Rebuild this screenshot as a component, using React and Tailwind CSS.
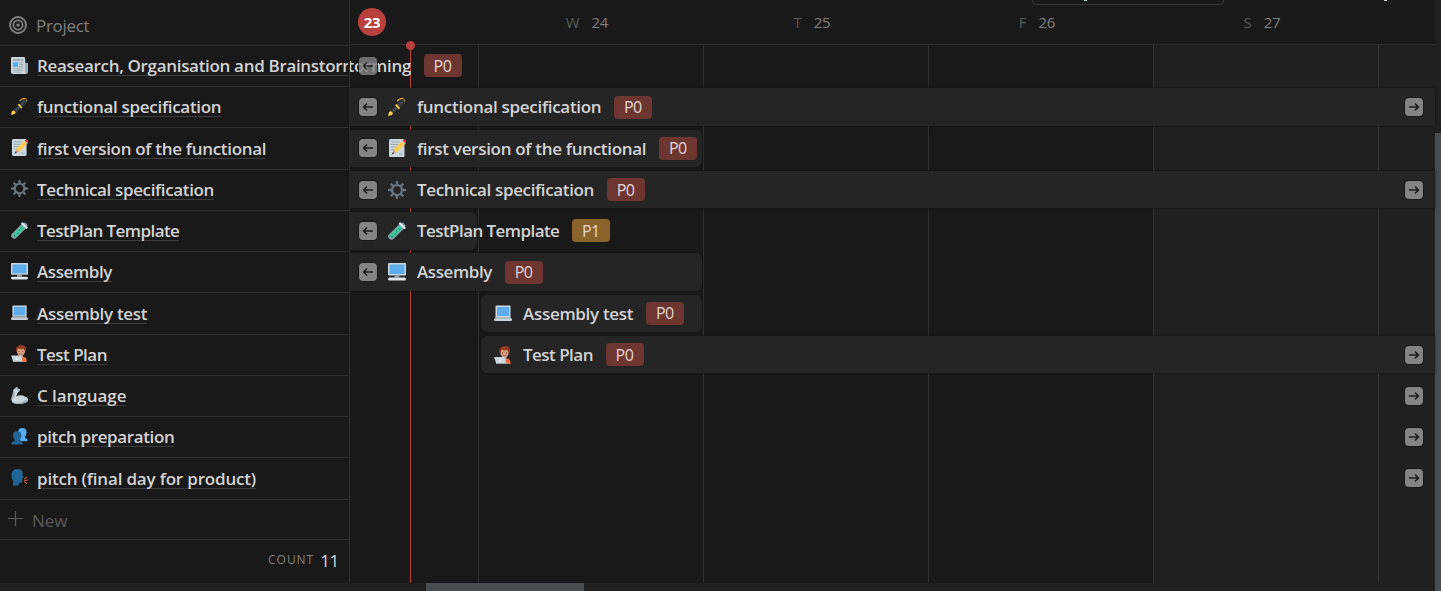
import React from "react";

const Emoji = ({ name, className }) => (
  <svg viewBox="0 0 36 36" className={`shrink-0 ${className}`}>
    {EMOJI[name]}
  </svg>
);

const EMOJI = {
  newspaper: (
    <>
      <path fill="#99AAB5" d="M26 12h7a3 3 0 0 1 3 3v17a4 4 0 0 1-4 4h-6z" />
      <path fill="#CCD6DD" d="M3 0h24a3 3 0 0 1 3 3v29c0 2 1 4 3 4H4a4 4 0 0 1-4-4V3a3 3 0 0 1 3-3z" />
      <path fill="#99AAB5" d="M4 4h22v4H4zM17 11h9v2h-9zM17 15h9v2h-9zM17 19h9v2h-9zM4 23h22v2H4zM4 27h22v2H4zM4 31h19v2H4z" />
      <path fill="#55ACEE" d="M4 11h11v10H4z" />
    </>
  ),
  pen: (
    <>
      <path fill="#FFCC4D" d="M0 36l2-8 4-2 4 4-2 4z" />
      <path fill="#31383d" d="M6 25L25 4q5-4 8-1t-1 8L12 31z" />
      <path fill="#454d53" d="M9 25L27 7l2 2-18 19z" />
      <path fill="#FFCC4D" d="M14 14l3-2 7 8-2 3z" />
      <path fill="none" stroke="#FFAC33" strokeWidth="2.200" d="M18 6q7-6 12-5" />
      <path fill="none" stroke="#FFAC33" strokeWidth="2" strokeDasharray="3 2" d="M30 1q6 2 2 8" />
    </>
  ),
  memo: (
    <>
      <path fill="#CCD6DD" d="M5 0h25a3 3 0 0 1 3 3v30a3 3 0 0 1-3 3H5a3 3 0 0 1-3-3V3a3 3 0 0 1 3-3z" />
      <path fill="#99AAB5" d="M6 5h17v2H6zM6 10h15v2H6zM6 15h11v2H6zM6 20h7v2H6zM22 29h7v2h-7z" />
      <path fill="#FFCC4D" d="M11 21L28 4l6 6-17 17z" />
      <path fill="#CCD6DD" d="M28 4l2-2 6 6-2 2z" />
      <path fill="#DD2E44" d="M30 2q2-2 5 0t1 5l-1 2-6-6z" />
      <path fill="#D99E82" d="M11 21l6 6-8 3z" />
      <path fill="#292F33" d="M10 26l-3 5 5-2z" />
    </>
  ),
  gear: (
    <>
      <g fill="#66757F">
        <path d="M16 0h4l1 7h-6zM16 36h4l1-7h-6zM0 16v4l7 1v-6zM36 16v4l-7 1v-6z" />
        <path d="M4 7l3-3 6 5-4 4zM32 7l-3-3-6 5 4 4zM4 29l3 3 6-5-4-4zM32 29l-3 3-6-5 4-4z" />
      </g>
      <circle cx="18" cy="18" r="10" fill="none" stroke="#66757F" strokeWidth="4.500" />
    </>
  ),
  tube: (
    <>
      <path stroke="#8899A6" strokeWidth="13" strokeLinecap="round" d="M7 29L28 8" />
      <path stroke="#3CC9A0" strokeWidth="8.500" strokeLinecap="round" d="M8 28L24 12" />
      <path stroke="#E1E8ED" strokeWidth="4.500" strokeLinecap="round" d="M24 3l9 9" />
      <g fill="#1C8F62">
        <circle cx="8" cy="29" r="2" />
        <circle cx="15" cy="24" r="1.7" />
        <circle cx="17" cy="18" r="1.5" />
        <circle cx="23" cy="15" r="1.5" />
      </g>
    </>
  ),
  desktop: (
    <>
      <path fill="#CCD6DD" d="M2 0h32a2 2 0 0 1 2 2v21a2 2 0 0 1-2 2H2a2 2 0 0 1-2-2V2a2 2 0 0 1 2-2z" />
      <path fill="#5DADEC" d="M3 3h30v19H3z" />
      <path fill="#99AAB5" d="M13 25h10v4H13z" />
      <path fill="#E1E8ED" d="M3 29h30q3 0 3 3t-3 3H3q-3 0-3-3t3-3z" />
      <path stroke="#CCD6DD" strokeDasharray="3 1" d="M3 32h30" />
    </>
  ),
  laptop: (
    <>
      <path fill="#CCD6DD" d="M5 3h26a1.500 1.500 0 0 1 2 2v21H3V5a2 2 0 0 1 2-2z" />
      <path fill="#5DADEC" d="M6 6h24v18H6z" />
      <path fill="#AEBBC1" d="M3 26h30l3 5H0z" />
      <path fill="#CCD6DD" d="M0 30h36v2q0 2-3 2H3q-3 0-3-2z" />
    </>
  ),
  technologist: (
    <>
      <path fill="#F4713B" d="M9 36v-5q0-5 6-6h11q7 1 7 7v4z" />
      <path fill="#D99E82" d="M17 20h8v8h-8z" />
      <ellipse cx="21" cy="13" rx="8.500" ry="10" fill="#D99E82" />
      <path fill="#963B22" d="M11 14Q9 6 14 3q3-3 8-3 9 0 10 8 0 4-2 7-1-6-4-7-6 2-10-1-3 2-3 8z" />
      <path fill="#662113" d="M16 13h2v2h-2zM24 13h2v2h-2z" />
      <path fill="none" stroke="#9E4F35" strokeWidth="1.500" d="M18 19h6" />
      <path fill="#CCD6DD" d="M0 22h20q2 0 2 2l2 12H5z" />
      <path fill="#99AAB5" d="M4 34h22v2H4z" />
      <circle cx="12" cy="29" r="2.200" fill="#F5F8FA" />
    </>
  ),
  arm: (
    <>
      <path fill="#CCD6DD" d="M5 6l5-4 7 2 1 5-4 3-3 8q10-5 18 0 7 1 7 7 0 7-11 8Q11 38 3 33q-4-7 0-16z" />
      <path fill="#99AAB5" d="M5 6l3 4-2 11-5 7q0-8 4-15zM3 31q12 5 23-1l9-3q0 7-11 8-14 2-21-4z" />
      <path fill="#AAB8C2" d="M10 0h4v5h-4zM15 3l4 2-2 5-3-1z" />
    </>
  ),
  people: (
    <>
      <path fill="#55ACEE" d="M15 9q0-9 9-9t9 9q0 6-3 9v3q5 1 5 5v2H20z" />
      <path fill="#226699" d="M4 16q0-9 9-9t9 9q0 7-4 10v2q7 1 7 6v1H1v-2q0-4 7-5v-2q-4-4-4-10z" />
    </>
  ),
  speaking: (
    <>
      <path fill="#226699" d="M1 12Q2 0 14 0q10 0 11 9l-1 3 2 6-2 2v6q-1 4-7 3l-1 6H4l1-9q-5-6-4-14z" />
      <path fill="none" stroke="#F4713B" strokeWidth="2" d="M28 21l6-4M28 24h7M28 27l6 4" />
    </>
  ),
};

const TASKS = [
  { icon: "newspaper", name: "Reasearch, Organisation and Brainstorming", track: "tracking-[-0.32px]", bar: "past", tag: "P0" },
  { icon: "pen", name: "functional specification", track: "tracking-[-0.3px]", bar: "w-full", from: true, to: true, tag: "P0" },
  { icon: "memo", name: "first version of the functional", track: "tracking-[-0.3px]", bar: "w-[352px] rounded-r-md", from: true, tag: "P0" },
  { icon: "gear", name: "Technical specification", track: "tracking-[-0.36px]", bar: "w-full", from: true, to: true, tag: "P0" },
  { icon: "tube", name: "TestPlan Template", track: "tracking-[-0.57px]", bar: "w-[127px] rounded-r-md", from: true, tag: "P1" },
  { icon: "desktop", name: "Assembly", track: "tracking-[-0.4px]", bar: "w-[352px] rounded-r-md", from: true, tag: "P0" },
  { icon: "laptop", name: "Assembly test", track: "tracking-[-0.3px]", bar: "ml-[131px] w-[221px] rounded-md", tag: "P0" },
  { icon: "technologist", name: "Test Plan", track: "tracking-[-0.53px]", bar: "ml-[131px] w-[954px] rounded-l-md", to: true, tag: "P0" },
  { icon: "arm", name: "C language", track: "tracking-[-0.05px]", to: true },
  { icon: "people", name: "pitch preparation", track: "tracking-[-0.37px]", to: true },
  { icon: "speaking", name: "pitch (final day for product)", track: "tracking-[-0.18px]", to: true },
];

const DAYS = [
  ["W", "24"],
  ["T", "25"],
  ["F", "26"],
  ["S", "27"],
];

const TITLE = "text-[17px] font-semibold whitespace-nowrap text-[#d3d3d3]";

const Jump = ({ flip, className = "" }) => (
  <span className={`flex size-[18px] shrink-0 items-center justify-center rounded bg-[#848484] shadow-[0_0_0_1px_#181818] ${className}`}>
    <svg viewBox="0 0 12 12" className={`size-3 ${flip ? "-scale-x-100" : ""}`} fill="none" stroke="#1b1b1b" strokeWidth="1.500" strokeLinecap="round" strokeLinejoin="round">
      <path d="M1.500 6h9M7.400 3L10.500 6 7.400 9" />
    </svg>
  </span>
);

const Tag = ({ label }) => (
  <span
    className={`ml-[13px] flex h-[23px] w-[38px] shrink-0 items-center justify-center rounded pr-px text-base tracking-[-0.5px] text-[#e3d6d4] ${
      label === "P1" ? "bg-[#89632a]" : "bg-[#6e3630]"
    }`}
  >
    {label}
  </span>
);

function TaskBar({ task }) {
  if (task.bar === "past") {
    return (
      <div className="relative flex h-[37.5px] items-center">
        <div className={`flex w-[61px] justify-end overflow-hidden leading-6 ${TITLE} ${task.track}`}>{task.name}</div>
        <Tag label={task.tag} />
        <Jump flip className="absolute left-[9px] opacity-80" />
      </div>
    );
  }
  return (
    <div className="relative flex h-[37.5px] items-center">
      {task.bar && (
        <div className={`flex h-full items-center bg-[#252525] shadow-[0_0_2px_#111] ${task.bar} ${task.from ? "pl-[9px]" : "pl-[13px]"}`}>
          {task.from && <Jump flip className="mr-[11px]" />}
          <Emoji name={task.icon} className="mr-[11px] size-[18px]" />
          <span className={`mt-[0.5px] leading-5 ${TITLE} ${task.track}`}>{task.name}</span>
          <Tag label={task.tag} />
        </div>
      )}
      {task.to && <Jump className="absolute right-3" />}
    </div>
  );
}

function Sidebar() {
  return (
    <aside className="flex w-[350px] shrink-0 flex-col border-r border-[#2f2f2f]">
      <div className="mr-px flex h-[45.9px] items-center border-b border-[#2f2f2f] pt-[5px] pl-[9px]">
        <svg viewBox="0 0 18 18" className="size-[18px]" fill="none" stroke="#7f7f7f" strokeWidth="2">
          <circle cx="9" cy="9" r="8" />
          <circle cx="9" cy="9" r="4.600" strokeWidth="1.800" />
          <circle cx="9" cy="9" r="1.700" fill="#7f7f7f" stroke="none" />
        </svg>
        <span className="mt-[2px] ml-[9px] text-[17px] tracking-[-0.3px] text-[#7f7f7f]">Project</span>
      </div>
      {TASKS.map((t) => (
        <div key={t.name} className="mr-px flex h-[41.25px] items-center overflow-hidden border-b border-[#2f2f2f] pt-[1.2px] pl-[11px]">
          <Emoji name={t.icon} className="mr-[9px] mb-[3px] size-[17px]" />
          <span className={`border-b border-[#3c3c3c] leading-[18px] ${TITLE} ${t.track}`}>{t.name}</span>
        </div>
      ))}
      <div className="flex h-[40.35px] items-center border-b border-[#2f2f2f] pl-2">
        <svg viewBox="0 0 15 15" className="mb-px size-[15px]" stroke="#5a5a5a" strokeWidth="1.200">
          <path d="M7.500 0v15M0 7.500h15" />
        </svg>
        <span className="mt-[2px] ml-[9px] text-[17px] text-[#5a5a5a]">New</span>
      </div>
      <div className="flex flex-1 items-center justify-end pr-2.5 pb-[2px]">
        <span className="mr-1.5 text-xs tracking-[0.95px] text-[#7f7f7f]">COUNT</span>
        <span className="text-[17px] tracking-[-0.3px] text-[#d6d6d6]">11</span>
      </div>
    </aside>
  );
}

function Timeline() {
  return (
    <section className="flex w-[1085px] shrink-0 flex-col">
      <header className="relative flex h-[45px] items-center border-b border-[#2f2f2f] text-[15px]">
        <div className="flex w-[128px] pl-2">
          <span className="flex size-7 items-center justify-center rounded-full bg-[#b8403d] text-[15px] font-bold tracking-[-0.4px] text-white">23</span>
        </div>
        {DAYS.map(([day, date]) => (
          <div key={date} className="flex w-[225px] justify-center gap-3 pr-[7px] tracking-[-0.2px]">
            <span className="text-[#5a5a5a]">{day}</span>
            <span className="text-[#7f7f7f]">{date}</span>
          </div>
        ))}
        <div className="absolute top-0 left-[682px] h-[5px] w-[192px] rounded-b-md border border-t-0 border-[#373737]" />
        <span className="absolute top-0 left-[734px] h-px w-[3px] bg-[#b5cfd2]" />
        <span className="absolute top-0 left-[1034px] h-px w-[3px] bg-[#d8d8d8]" />
      </header>
      <div className="relative grid flex-1">
        <div className="col-start-1 row-start-1 flex">
          <div className="w-[129px] border-r border-[#2f2f2f]" />
          <div className="w-[225px] border-r border-[#2f2f2f]" />
          <div className="w-[225px] border-r border-[#2f2f2f]" />
          <div className="w-[225px] border-r border-[#2f2f2f]" />
          <div className="w-[225px] border-r border-[#363636] bg-[#202020]" />
          <div className="flex-1 bg-[#202020]" />
        </div>
        <div className="absolute inset-y-0 left-[60px] w-px bg-[#b8403d]" />
        <div className="absolute -top-1 left-14 size-[9px] rounded-full bg-[#b8403d]" />
        <div className="relative col-start-1 row-start-1 pt-[2px]">
          {TASKS.map((t) => (
            <div key={t.name} className="h-[41.25px]">
              <TaskBar task={t} />
            </div>
          ))}
        </div>
      </div>
    </section>
  );
}

export default function App() {
  return (
    <div className="flex h-[591px] w-[1441px] flex-col overflow-hidden bg-[#191919] font-['Open_Sans','Noto_Sans',sans-serif]">
      <div className="flex h-[583px]">
        <Sidebar />
        <Timeline />
        <div className="flex-1 bg-[#202020] pt-[133px]">
          <div className="h-[450px] bg-[#474c50]" />
        </div>
      </div>
      <div className="flex h-2 justify-between bg-[#202020] pl-[426px]">
        <div className="w-[158px] bg-[#474c50]" />
        <div className="w-[6px] bg-[#474c50]" />
      </div>
    </div>
  );
}
